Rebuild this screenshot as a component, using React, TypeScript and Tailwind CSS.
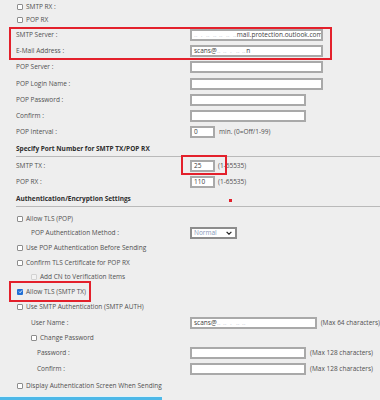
import type { ReactNode } from "react";

function Box({ checked, faded }: { checked?: boolean; faded?: boolean }) {
	if (checked) {
		return (
			<span className="flex h-[6px] w-[6px] shrink-0 items-center justify-center rounded-[1px] bg-[#1f6fd6]">
				<svg viewBox="0 0 10 10" className="h-[5px] w-[5px]">
					<path d="M2 5.2 4.2 7.4 8 2.8" fill="none" stroke="white" strokeWidth="1.8" />
				</svg>
			</span>
		);
	}
	return (
		<span
			className={`h-[6px] w-[6px] shrink-0 rounded-[1px] border ${faded ? "border-[#d2d2d2] bg-[#f2f2f2]" : "border-[#8d8d8d] bg-white"}`}
		/>
	);
}

function Field({ w, children }: { w: string; children?: ReactNode }) {
	return (
		<div
			className={`flex h-[12px] items-center overflow-hidden whitespace-nowrap border-2 border-[#a9a9a9] bg-white px-[2px] text-[6.5px] text-[#3d3d3d] ${w}`}
		>
			{children}
		</div>
	);
}

function Blur({ children }: { children: ReactNode }) {
	return <span className="tracking-[1px] text-[#c9cfd8]">{children}</span>;
}

function LabelRow({
	h,
	label,
	indent = "pl-[16px]",
	children,
}: {
	h: string;
	label: string;
	indent?: string;
	children?: ReactNode;
}) {
	return (
		<div className={`flex items-center ${h}`}>
			<div className={`w-[190px] shrink-0 ${indent}`}>{label}</div>
			{children}
		</div>
	);
}

function CheckRow({
	h,
	label,
	indent = "pl-[17px]",
	checked,
	faded,
}: {
	h: string;
	label: string;
	indent?: string;
	checked?: boolean;
	faded?: boolean;
}) {
	return (
		<div className={`flex items-center gap-[3px] ${h} ${indent}`}>
			<Box checked={checked} faded={faded} />
			<span>{label}</span>
		</div>
	);
}

function Heading({ h, title }: { h: string; title: string }) {
	return (
		<div className={`ml-[16px] flex items-end border-b border-[#b9b9b9] pb-[2px] font-bold text-[#2e2e2e] ${h}`}>
			{title}
		</div>
	);
}

export default function App() {
	return (
		<div className="relative h-[400px] w-[380px] overflow-hidden bg-[#eeeeee] font-['Open_Sans',sans-serif] text-[6.5px] text-[#505050]">
			<div className="flex flex-col">
				<CheckRow h="h-[13px]" label="SMTP RX :" />
				<CheckRow h="h-[14px]" label="POP RX" />
				<LabelRow h="h-[15px]" label="SMTP Server :">
					<Field w="w-[133px]">
						<Blur>‥ . ‥ ‥ ‥ ‥ ‥</Blur>
						<span>mail.protection.outlook.com</span>
					</Field>
				</LabelRow>
				<LabelRow h="h-[17px]" label="E-Mail Address :">
					<Field w="w-[133px]">
						<span>scans@</span>
						<Blur>‥ ‥ . ‥ ‥</Blur>
						<span>n</span>
					</Field>
				</LabelRow>
				<LabelRow h="h-[16px]" label="POP Server :">
					<Field w="w-[133px]" />
				</LabelRow>
				<LabelRow h="h-[17px]" label="POP Login Name :">
					<Field w="w-[133px]" />
				</LabelRow>
				<LabelRow h="h-[16px]" label="POP Password :">
					<Field w="w-[116px]" />
				</LabelRow>
				<LabelRow h="h-[16px]" label="Confirm :">
					<Field w="w-[116px]" />
				</LabelRow>
				<LabelRow h="h-[16px]" label="POP Interval :">
					<Field w="w-[25px]">0</Field>
					<span className="ml-[4px]">min. (0=Off/1-99)</span>
				</LabelRow>
				<Heading h="h-[17px]" title="Specify Port Number for SMTP TX/POP RX" />
				<LabelRow h="h-[17px]" label="SMTP TX :">
					<Field w="w-[25px]">25</Field>
					<span className="ml-[3px]">(1-65535)</span>
				</LabelRow>
				<LabelRow h="h-[16px]" label="POP RX :">
					<Field w="w-[25px]">110</Field>
					<span className="ml-[3px]">(1-65535)</span>
				</LabelRow>
				<Heading h="h-[17px]" title="Authentication/Encryption Settings" />
				<div className="h-[5px]" />
				<CheckRow h="h-[14px]" label="Allow TLS (POP)" />
				<LabelRow h="h-[14px]" label="POP Authentication Method :" indent="pl-[31px]">
					<div className="flex h-[12px] w-[47px] items-center justify-between border-2 border-[#8c8c8c] bg-white pl-[2px] pr-[3px]">
						<span className="text-[#8797b8]">Normal</span>
						<svg viewBox="0 0 10 6" className="h-[4px] w-[6px]">
							<path d="M1 1 5 5 9 1" fill="none" stroke="#222" strokeWidth="2" />
						</svg>
					</div>
				</LabelRow>
				<CheckRow h="h-[15px]" label="Use POP Authentication Before Sending" />
				<CheckRow h="h-[15px]" label="Confirm TLS Certificate for POP RX" />
				<CheckRow h="h-[14px]" label="Add CN to Verification Items" indent="pl-[31px]" faded />
				<CheckRow h="h-[15px]" label="Allow TLS (SMTP TX)" checked />
				<CheckRow h="h-[16px]" label="Use SMTP Authentication (SMTP AUTH)" />
				<LabelRow h="h-[15px]" label="User Name :" indent="pl-[31px]">
					<Field w="w-[133px]">
						<span>scans@</span>
						<Blur>‥ ‥ . ‥ ‥</Blur>
					</Field>
					<span className="ml-[4px] whitespace-nowrap">(Max 64 characters)</span>
				</LabelRow>
				<CheckRow h="h-[15px]" label="Change Password" indent="pl-[31px]" />
				<LabelRow h="h-[15px]" label="Password :" indent="pl-[37px]">
					<Field w="w-[116px]" />
					<span className="ml-[4px] whitespace-nowrap">(Max 128 characters)</span>
				</LabelRow>
				<LabelRow h="h-[18px]" label="Confirm :" indent="pl-[37px]">
					<Field w="w-[116px]" />
					<span className="ml-[4px] whitespace-nowrap">(Max 128 characters)</span>
				</LabelRow>
				<CheckRow h="h-[16px]" label="Display Authentication Screen When Sending" />
				<div className="mt-[2px] h-[6px] w-[162px] border-t border-[#dff3fb] bg-[#4db8e8]" />
			</div>

			<div className="absolute left-[9px] top-[27px] h-[33px] w-[323px] border-2 border-[#e3202b]" />
			<div className="absolute left-[181px] top-[155px] h-[20px] w-[46px] border-2 border-[#e3202b]" />
			<div className="absolute left-[9px] top-[281px] h-[21px] w-[82px] border-2 border-[#e3202b]" />
			<div className="absolute left-[229px] top-[199px] h-[3px] w-[3px] bg-[#e3202b]" />
		</div>
	);
}
